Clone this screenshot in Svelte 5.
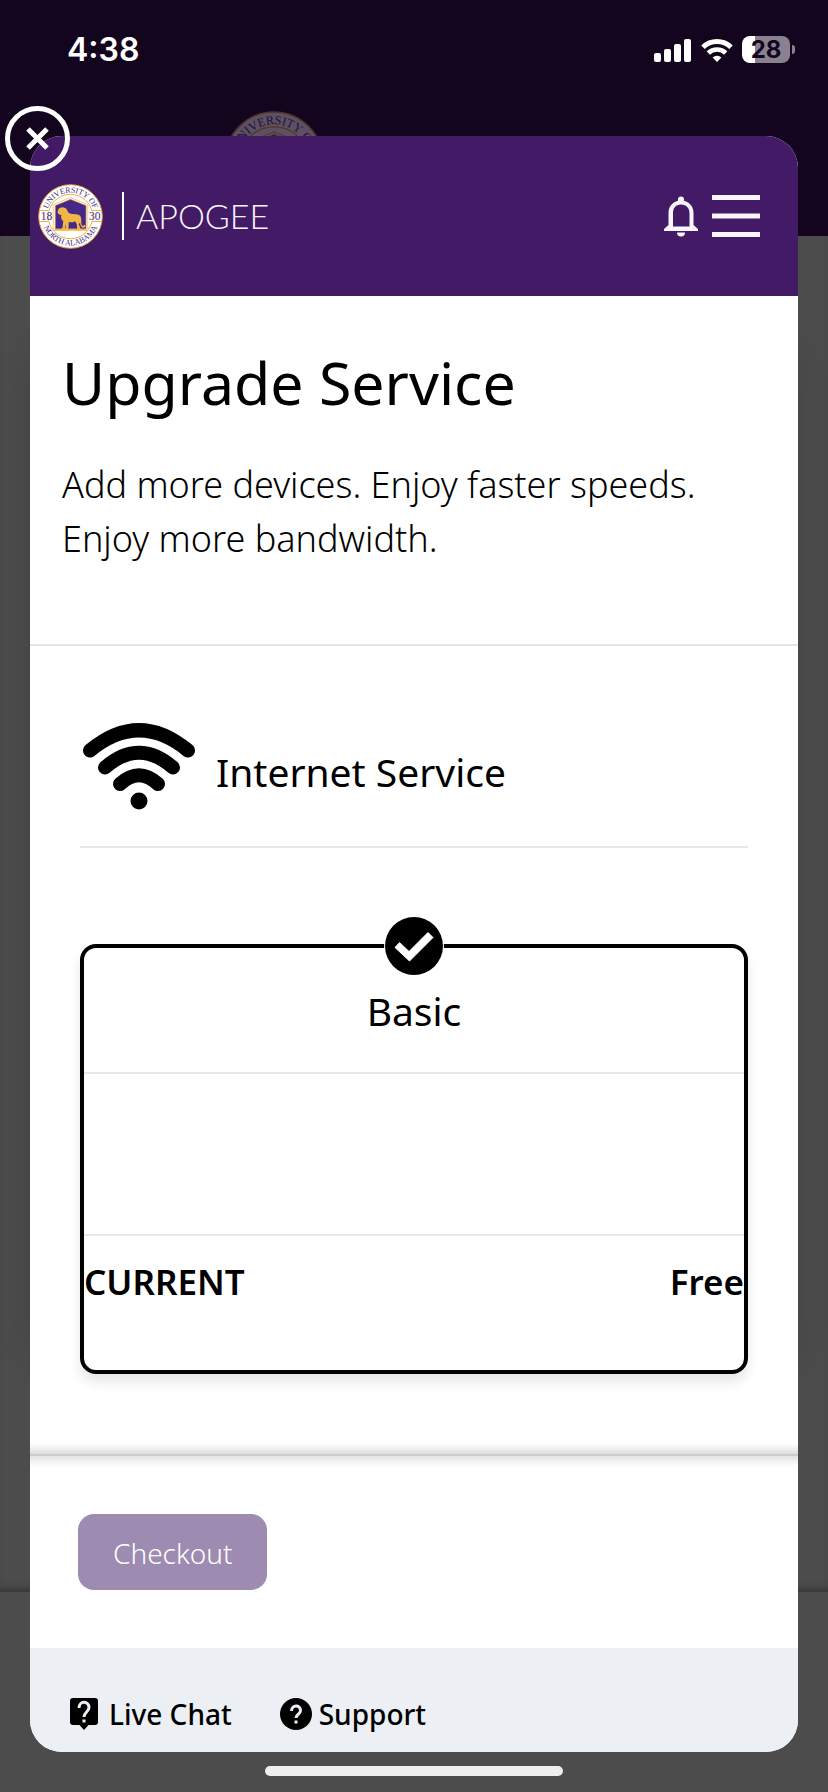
<script lang="ts">
  let dialogOpen = $state(true);
  const signal = [9, 13, 18, 23];
</script>

{#snippet seal(id: string, full: boolean)}
  <svg viewBox="0 0 196 196" role="img" aria-label="University of North Alabama seal">
    <defs>
      <path id="{id}-top" d="M26 98 A72 72 0 0 1 170 98" />
      <path id="{id}-bottom" d="M11 98 A87 87 0 0 0 185 98" />
    </defs>
    <circle cx="98" cy="98" r="96" fill="#fff" stroke="#d79a45" stroke-width="3" />
    <path d="M3 80H193M3 113H193" stroke="#e9b04a" stroke-width="3" />
    <circle cx="98" cy="98" r="67" fill="#fff" stroke="#e9b04a" stroke-width="3" />
    <path d="M32 81H48V112H32zM148 81H164V112H148z" fill="#fff" />
    <path d="M46 140V62L98 41L150 62V140z" fill="#fff" stroke="#e9b04a" stroke-width="2" />
    <path d="M52 138V65L98 46L145 65V138z" fill="#46278a" stroke="#e0a23c" stroke-width="2" />
    <path
      d="M59 86C58 82 62 80 61 77C65 70 75 68 81 72C87 73 88 80 92 86C98 93 116 89 125 94C132 99 130 110 131 120C132 127 136 128 139 124C144 122 145 130 139 131C132 134 127 126 127 116L123 121L129 136H118L117 122L112 112C104 117 98 116 93 114L92 136H80L84 131V120L81 136H70L74 131L76 112C70 108 68 100 71 93C66 94 61 92 59 86z"
      fill="#efb646"
    />
    <path d="M53 137H145" stroke="#efb646" stroke-width="5" />
    <g fill="#3f2a80" font-family="Liberation Serif, serif" text-anchor="middle">
      <text font-size="24"><textPath href="#{id}-top" startOffset="50%">UNIVERSITY OF</textPath></text>
      {#if full}
        <text font-size="24"><textPath href="#{id}-bottom" startOffset="50%">NORTH ALABAMA</textPath></text>
        <text x="26" y="108" font-size="35">18</text>
        <text x="171" y="108" font-size="35">30</text>
      {/if}
    </g>
  </svg>
{/snippet}

<div class="screen">
  <div class="backdrop" aria-hidden="true">
    <div class="backdrop-header"><span class="backdrop-seal">{@render seal('back', false)}</span></div>
    <div class="backdrop-body"><div class="backdrop-card"></div></div>
    <div class="backdrop-footer"></div>
  </div>

  <div class="status">
    <time>4:38</time>
    <div class="status-icons">
      <svg width="38" height="24" viewBox="0 0 38 24" fill="#fff" aria-label="Signal">
        {#each signal as h, i}
          <rect x={i * 10} y={24 - h} width="7" height={h} rx="2" />
        {/each}
      </svg>
      <svg width="32" height="24" viewBox="0 0 32 24" fill="none" stroke="#fff" stroke-width="5" aria-label="Wi-Fi">
        <path d="M2 9.2A20 20 0 0 1 30 9.2" />
        <path d="M7.3 15A12.5 12.5 0 0 1 24.7 15" stroke-width="4.6" />
        <path d="M16 24L11.6 19.5A6.2 6.2 0 0 1 20.4 19.5z" fill="#fff" stroke="none" />
      </svg>
      <span class="battery">28</span>
    </div>
  </div>

  {#if dialogOpen}
    <div class="dialog" role="dialog" aria-labelledby="title">
      <button class="close" aria-label="Close" onclick={() => (dialogOpen = false)}>
        <svg width="23" height="23" viewBox="0 0 23 23" stroke="#fff" stroke-width="5"><path d="M2 2L21 21M21 2L2 21" /></svg>
      </button>

      <header>
        <span class="seal">{@render seal('front', true)}</span>
        <span class="brand">APOGEE</span>
        <button class="icon" aria-label="Notifications">
          <svg width="34" height="42" viewBox="0 0 34 42" fill="#f8f5fb">
            <path fill-rule="evenodd" d="M14 4.500a3 3 0 0 1 6 0v1.200C26 7 29.500 12 29.500 18v12l4.500 4v2H0v-2l4.500-4V18C4.500 12 8 7 14 5.700zM9 31.500h16.500V18c0-5-3.300-8.500-8.500-8.500S9 13 9 18z" />
            <path d="M13 37.500h8a4 4 0 0 1-8 0z" />
          </svg>
        </button>
        <button class="icon" aria-label="Menu">
          <svg width="48" height="42" viewBox="0 0 48 42" fill="#f8f5fb"><path d="M0 0h48v5H0zM0 18.500h48v5H0zM0 37h48v5H0z" /></svg>
        </button>
      </header>

      <section class="intro">
        <h1 id="title">Upgrade Service</h1>
        <p>Add more devices. Enjoy faster speeds. Enjoy more bandwidth.</p>
      </section>

      <section class="plans">
        <div class="service">
          <svg width="118" height="90" viewBox="0 0 118 90" fill="none" stroke="#000" stroke-width="14" stroke-linecap="round" aria-hidden="true">
            <path d="M10 30.500Q59 -10 108 30.500" />
            <path d="M25 47.500Q59 18 93 47.500" />
            <path d="M40 64Q59 46.500 78 64" />
            <circle cx="59" cy="81" r="8.500" fill="#000" stroke="none" />
          </svg>
          <h2>Internet Service</h2>
        </div>

        <article class="card">
          <svg class="check" width="60" height="60" viewBox="0 0 60 60" aria-label="Selected">
            <circle cx="30" cy="30" r="30" fill="#fff" />
            <circle cx="30" cy="30" r="29" fill="#000" />
            <path d="M11 31.500L15.500 26.500L25 35.500L44 16.500L49 21.500L25.500 45z" fill="#fff" stroke="#fff" stroke-width="1" stroke-linejoin="round" />
          </svg>
          <h3>Basic</h3>
          <div class="details"></div>
          <div class="price"><span>CURRENT</span><span>Free</span></div>
        </article>
      </section>

      <section class="checkout">
        <button disabled>Checkout</button>
      </section>

      <footer>
        <a href="#chat">
          <svg width="28" height="32" viewBox="0 0 28 32" aria-hidden="true">
            <path d="M3 0h22a3 3 0 0 1 3 3v21a3 3 0 0 1-3 3h-6.500L14 32l-4.500-5H3a3 3 0 0 1-3-3V3a3 3 0 0 1 3-3z" />
            <path d="M9 10C9 2.500 19 2.500 19 9.500C19 14 14 14 14 19M14 21.500v3" fill="none" stroke="#eceff4" stroke-width="3" />
          </svg>
          Live Chat
        </a>
        <a class="support" href="#support">
          <svg width="32" height="32" viewBox="0 0 32 32" aria-hidden="true">
            <circle cx="16" cy="16" r="16" />
            <path d="M11.500 13C11.500 6.500 20.500 6.500 20.500 12.500C20.500 16.500 16 16 16 20M16 22.500v3" fill="none" stroke="#eceff4" stroke-width="3" />
          </svg>
          Support
        </a>
      </footer>
    </div>
  {/if}

  <div class="home-bar"></div>
</div>

<style>
  .screen {
    position: relative;
    min-height: 100vh;
    box-sizing: border-box;
    display: flex;
    flex-direction: column;
    font-family: 'Noto Sans', sans-serif;
    color: #000;
    background: #4c4c4c;
  }
  button {
    font: inherit;
    border: 0;
    padding: 0;
    background: none;
    cursor: pointer;
  }
  svg {
    display: block;
    flex: none;
  }
  h1, h2, h3, p {
    margin: 0;
    font-weight: 400;
  }

  .backdrop {
    position: absolute;
    inset: 0;
    display: flex;
    flex-direction: column;
  }
  .backdrop-header {
    height: 236px;
    box-sizing: border-box;
    padding: 111px 0 0 224px;
    background: #14051e;
  }
  .backdrop-seal {
    display: block;
    width: 100px;
    opacity: 0.3;
  }
  .backdrop-body {
    flex: 1;
    padding: 120px 36px 240px;
    display: flex;
    background: #4c4c4c;
    box-shadow: inset 0 -8px 8px -6px #303030;
  }
  .backdrop-card {
    flex: 1;
    box-shadow: 0 0 36px rgba(0, 0, 0, 0.16);
  }
  .backdrop-footer {
    height: 200px;
    background: #4c4c4c;
  }

  .status {
    position: relative;
    height: 136px;
    box-sizing: border-box;
    padding: 30px 34px 0 67px;
    display: flex;
    justify-content: space-between;
    align-items: flex-start;
    color: #fff;
    font-family: Inter, sans-serif;
  }
  time {
    font-size: 32px;
    font-weight: 600;
    line-height: 40px;
  }
  .status-icons {
    display: flex;
    align-items: center;
    gap: 9px;
    height: 39px;
  }
  .battery {
    position: relative;
    width: 48px;
    height: 27px;
    margin-right: 4px;
    border-radius: 8px;
    background: linear-gradient(90deg, #fff 13px, #89818f 13px);
    color: #14051e;
    font-size: 24px;
    font-weight: 700;
    line-height: 27px;
    text-align: center;
  }
  .battery::after {
    content: '';
    position: absolute;
    left: 50px;
    top: 9px;
    width: 3px;
    height: 9px;
    border-radius: 0 4px 4px 0;
    background: #89818f;
  }

  .dialog {
    position: relative;
    flex: 1;
    display: flex;
    flex-direction: column;
    margin: 0 30px;
    border-radius: 32px;
    background: #fff;
  }
  .close {
    position: absolute;
    left: -25px;
    top: -30px;
    width: 65px;
    height: 65px;
    display: grid;
    place-items: center;
    border: 5px solid #fff;
    border-radius: 50%;
  }
  header {
    height: 160px;
    box-sizing: border-box;
    padding: 0 38px 0 8px;
    display: flex;
    align-items: center;
    border-radius: 32px 32px 0 0;
    background: #421a66;
  }
  .seal {
    width: 65px;
  }
  .brand {
    margin: 0 auto 0 19px;
    padding-left: 12px;
    border-left: 2px solid #fff;
    color: #f8f5fb;
    font: 300 34px/48px Lato, sans-serif;
  }
  .icon + .icon {
    margin-left: 14px;
  }

  .intro {
    padding: 50px 32px 78px;
    border-bottom: 2px solid #e2e5ee;
  }
  h1 {
    font-size: 59px;
    line-height: 72px;
  }
  .intro p {
    margin-top: 40px;
    font-size: 36px;
    line-height: 54px;
    font-weight: 300;
  }

  .plans {
    flex: 1;
    padding: 74px 50px 80px;
    border-bottom: 2px solid #c9cdd3;
    box-shadow: inset 0 -12px 8px -8px rgba(0, 0, 0, 0.16);
  }
  .service {
    display: flex;
    align-items: center;
    gap: 18px;
    padding-bottom: 36px;
    border-bottom: 2px solid #e5e7ec;
  }
  h2, h3 {
    font-size: 39px;
    line-height: 52px;
  }
  h2 {
    padding-top: 14px;
  }
  .card {
    position: relative;
    margin-top: 96px;
    border: 4px solid #000;
    border-radius: 16px;
    box-shadow: 0 8px 12px rgba(0, 0, 0, 0.1);
  }
  .check {
    position: absolute;
    left: 50%;
    top: -32px;
    margin-left: -30px;
  }
  h3 {
    padding: 37px 0 35px;
    border-bottom: 2px solid #e5e7ec;
    text-align: center;
  }
  .details {
    height: 160px;
    border-bottom: 2px solid #e5e7ec;
  }
  .price {
    display: flex;
    justify-content: space-between;
    padding: 20px 0 62px;
    font-size: 35px;
    line-height: 52px;
    font-weight: 600;
  }

  .checkout {
    padding: 58px 48px;
    box-shadow: inset 0 14px 10px -10px rgba(0, 0, 0, 0.14);
  }
  .checkout button {
    padding: 19px 35px 17px;
    border-radius: 16px;
    background: #9d8bb1;
    color: #fff;
    font-size: 28px;
    line-height: 40px;
    font-weight: 300;
    display: block;
  }

  footer {
    display: flex;
    gap: 48px;
    padding: 46px 40px 18px;
    border-radius: 0 0 32px 32px;
    background: #eceff4;
  }
  footer a {
    display: flex;
    align-items: center;
    gap: 11px;
    color: #000;
    text-decoration: none;
    font-size: 28px;
    line-height: 40px;
    font-weight: 500;
  }
  footer .support {
    gap: 7px;
  }
  .home-bar {
    position: relative;
    width: 36%;
    height: 10px;
    margin: 14px auto 16px;
    border-radius: 5px;
    background: #eee;
  }
</style>
